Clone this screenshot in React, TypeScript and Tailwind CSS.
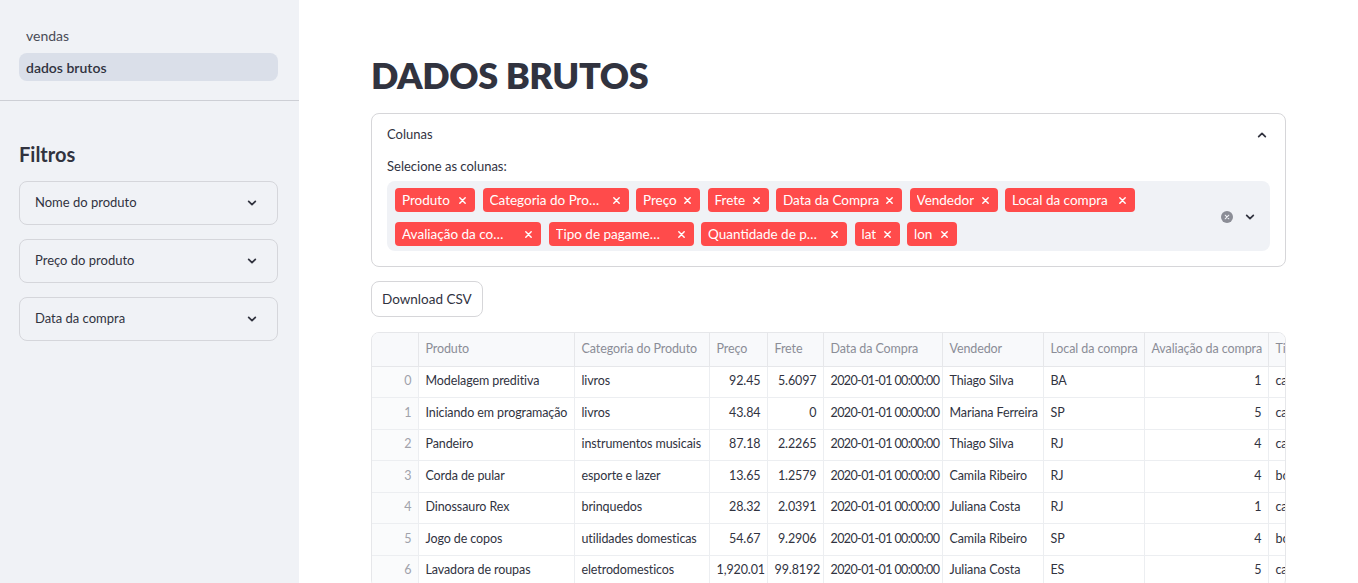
import React from 'react';

const font = { fontFamily: '"Lato", "Noto Sans", sans-serif' };

const tags: { label: string; w: string }[][] = [
  [
    { label: 'Produto', w: 'w-[80px]' },
    { label: 'Categoria do Pro…', w: 'w-[146px]' },
    { label: 'Preço', w: 'w-[64px]' },
    { label: 'Frete', w: 'w-[61px]' },
    { label: 'Data da Compra', w: 'w-[126px]' },
    { label: 'Vendedor', w: 'w-[88px]' },
    { label: 'Local da compra', w: 'w-[130px]' },
  ],
  [
    { label: 'Avaliação da co…', w: 'w-[146px]' },
    { label: 'Tipo de pagame…', w: 'w-[145px]' },
    { label: 'Quantidade de p…', w: 'w-[146px]' },
    { label: 'lat', w: 'w-[45px]' },
    { label: 'lon', w: 'w-[50px]' },
  ],
];

const rows = [
  ['Modelagem preditiva', 'livros', '92.45', '5.6097', 'Thiago Silva', 'BA', '1', 'cartao_credito'],
  ['Iniciando em programação', 'livros', '43.84', '0', 'Mariana Ferreira', 'SP', '5', 'cartao_credito'],
  ['Pandeiro', 'instrumentos musicais', '87.18', '2.2265', 'Thiago Silva', 'RJ', '4', 'cartao_credito'],
  ['Corda de pular', 'esporte e lazer', '13.65', '1.2579', 'Camila Ribeiro', 'RJ', '4', 'boleto'],
  ['Dinossauro Rex', 'brinquedos', '28.32', '2.0391', 'Juliana Costa', 'RJ', '1', 'cartao_credito'],
  ['Jogo de copos', 'utilidades domesticas', '54.67', '9.2906', 'Camila Ribeiro', 'SP', '4', 'boleto'],
  ['Lavadora de roupas', 'eletrodomesticos', '1,920.01', '99.8192', 'Juliana Costa', 'ES', '5', 'cartao_credito'],
];

const Chevron = ({ up = false, className = '' }: { up?: boolean; className?: string }) => (
  <svg viewBox="0 0 24 24" width="16" height="16" className={className} fill="none" stroke="currentColor" strokeWidth="2.6" strokeLinecap="round" strokeLinejoin="round">
    {up ? <path d="M7 14.5l5-5 5 5" /> : <path d="M7 9.5l5 5 5-5" />}
  </svg>
);

const SmallX = () => (
  <svg viewBox="0 0 10 10" width="9" height="9" fill="none" stroke="currentColor" strokeWidth="1.6" strokeLinecap="round">
    <path d="M2 2l6 6M8 2l-6 6" />
  </svg>
);

const FilterBox = ({ label }: { label: string }) => (
  <div className="flex h-[44px] items-center justify-between rounded-lg border border-[#d5d6db] px-[15px] text-[13px] text-[#31333f]">
    <span>{label}</span>
    <Chevron className="mr-[2px] text-[#31333f]" />
  </div>
);

const headers = ['', 'Produto', 'Categoria do Produto', 'Preço', 'Frete', 'Data da Compra', 'Vendedor', 'Local da compra', 'Avaliação da compra', 'Tipo de pagamento', 'Quantidade de parcelas'];
const widths = ['w-[46px]', 'w-[156px]', 'w-[135px]', 'w-[58px]', 'w-[56px]', 'w-[119px]', 'w-[101px]', 'w-[101px]', 'w-[124px]', 'w-[140px]', 'w-[160px]'];

const cell = 'border-r border-b border-[#eceef1] pl-[7px] pr-[6px] whitespace-nowrap overflow-hidden';

export default function App() {
  return (
    <div className="flex h-[583px] w-full overflow-hidden bg-white text-[#31333f]" style={font}>
      {/* sidebar */}
      <aside className="flex w-[299px] shrink-0 flex-col bg-[#f0f2f6]">
        <nav className="flex flex-col gap-[4px] pt-[21px] pr-[21px] pb-[19px] pl-[19px] text-[14px]">
          <div className="flex h-[28px] items-center rounded-lg px-[7px] text-[#4a4c57]">vendas</div>
          <div className="flex h-[28px] items-center rounded-lg bg-[#dadfe9] px-[7px] font-semibold text-[#31333f]">dados brutos</div>
        </nav>
        <div className="h-px bg-[#cdcfd5]" />
        <div className="pt-[37px] pr-[21px] pl-[19px]">
          <h2 className="mb-[11px] text-[20px] font-bold leading-[32px]">Filtros</h2>
          <div className="flex flex-col gap-[14px]">
            <FilterBox label="Nome do produto" />
            <FilterBox label="Preço do produto" />
            <FilterBox label="Data da compra" />
          </div>
        </div>
      </aside>

      {/* main */}
      <main className="min-w-0 flex-1 px-[72px] pt-[52px]">
        <h1 className="text-[36px] leading-[46px] font-extrabold tracking-[-0.4px] text-[#31333f]">DADOS BRUTOS</h1>

        <div className="mt-[15px] rounded-lg border border-[#d6d6d9] px-[15px] pb-[15px]">
          <div className="flex h-[42px] items-center justify-between text-[13px]">
            <span>Colunas</span>
            <Chevron up />
          </div>
          <div className="mb-[5px] text-[13px] leading-[20px]">Selecione as colunas:</div>
          <div className="flex items-center rounded-lg bg-[#f0f2f6] pt-[7px] pr-[12px] pb-[5px] pl-[8px]">
            <div className="flex flex-1 flex-col gap-[10px]">
              {tags.map((row, i) => (
                <div key={i} className="flex gap-x-[7.5px]">
                  {row.map((t) => (
                    <span key={t.label} className={`${t.w} flex h-[24px] items-center justify-between rounded-[4px] bg-[#ff4b4b] pr-[8px] pl-[7px] text-[13.5px] text-white`}>
                      <span className="truncate">{t.label}</span>
                      <SmallX />
                    </span>
                  ))}
                </div>
              ))}
            </div>
            <div className="flex items-center gap-[9px]">
              <span className="flex h-[12px] w-[12px] items-center justify-center rounded-full bg-[#8b8d96] text-[#f0f2f6]">
                <svg viewBox="0 0 10 10" width="6" height="6" fill="none" stroke="currentColor" strokeWidth="1.8" strokeLinecap="round">
                  <path d="M2 2l6 6M8 2l-6 6" />
                </svg>
              </span>
              <Chevron />
            </div>
          </div>
        </div>

        <button className="mt-[14px] h-[36px] rounded-lg border border-[#d6d6d9] bg-white px-[10px] text-[13.5px] text-[#31333f]">
          Download CSV
        </button>

        <div className="mt-[15px] overflow-hidden rounded-lg border border-[#e6e7ea]">
          <table className="w-[1196px] table-fixed border-collapse text-[12.5px] tracking-[-0.1px]">
            <colgroup>
              {widths.map((w, i) => (
                <col key={i} className={w} />
              ))}
            </colgroup>
            <thead>
              <tr className="h-[33px] bg-[#f8f9fb]">
                {headers.map((h, i) => (
                  <th key={i} className="overflow-hidden border-r border-b border-[#e6e7ea] pr-[6px] pl-[7px] text-left font-normal whitespace-nowrap text-[#8b8d97]">
                    {h}
                  </th>
                ))}
              </tr>
            </thead>
            <tbody>
              {rows.map((r, i) => (
                <tr key={i} className="h-[31.5px]">
                  <td className={`${cell} bg-[#fafbfc] text-right text-[#a0a2ab]`}>{i}</td>
                  <td className={cell}>{r[0]}</td>
                  <td className={cell}>{r[1]}</td>
                  <td className={`${cell} text-right`}>{r[2]}</td>
                  <td className={`${cell} text-right`}>{r[3]}</td>
                  <td className="overflow-hidden border-r border-b border-[#eceef1] pr-[2px] pl-[7px] tracking-[-0.6px] whitespace-nowrap">2020-01-01 00:00:00</td>
                  <td className={cell}>{r[4]}</td>
                  <td className={cell}>{r[5]}</td>
                  <td className={`${cell} text-right`}>{r[6]}</td>
                  <td className={cell}>{r[7]}</td>
                  <td className={`${cell} text-right`}>1</td>
                </tr>
              ))}
            </tbody>
          </table>
        </div>
      </main>
    </div>
  );
}
